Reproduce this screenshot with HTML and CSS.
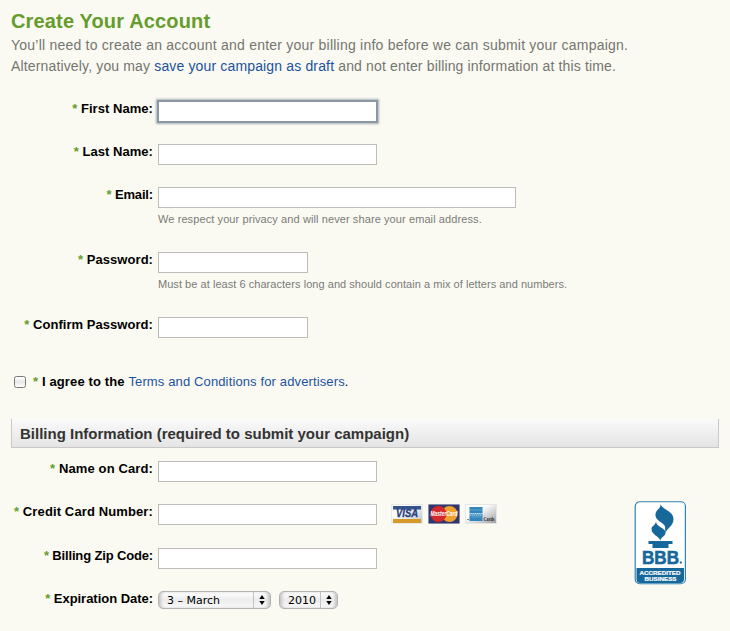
FILE: index.html
```html
<!DOCTYPE html>
<html lang="en">
<head>
<meta charset="utf-8">
<title>Create Your Account</title>
<link rel="stylesheet" href="styles.css">
</head>
<body>
<form class="page">
  <header class="intro">
    <h1><span>Create Your Account</span></h1>
    <p><span class="intro-a">You’ll need to create an account and enter your billing info before we can submit your campaign.</span><br>
    <span class="intro-b">Alternatively, you may <a href="#">save your campaign as draft</a> and not enter billing information at this time.</span></p>
  </header>

  <section class="account">
    <div class="row"><label for="first"><i>*</i> First Name:</label><div><input id="first" class="focused" type="text"></div></div>
    <div class="row"><label for="last"><i>*</i> Last Name:</label><div><input id="last" type="text"></div></div>
    <div class="row tall"><label for="email" class="tighter"><i>*</i> Email:</label><div><input id="email" class="wide" type="text"><small class="loose">We respect your privacy and will never share your email address.</small></div></div>
    <div class="row tall"><label for="pass"><i>*</i> Password:</label><div><input id="pass" class="short" type="password"><small>Must be at least 6 characters long and should contain a mix of letters and numbers.</small></div></div>
    <div class="row"><label for="confirm"><i>*</i> Confirm Password:</label><div><input id="confirm" class="short" type="password"></div></div>
  </section>

  <div class="agree"><input id="agree" type="checkbox"><label for="agree"><i>*</i> I agree to the <span><a href="#">Terms and Conditions for advertisers</a>.</span></label></div>

  <h2><span>Billing Information (required to submit your campaign)</span></h2>

  <section class="billing">
    <div class="fields">
      <div class="row"><label for="holder" class="loose"><i>*</i> Name on Card:</label><div><input id="holder" type="text"></div></div>
      <div class="row card-row"><label for="number" class="loose"><i>*</i> Credit Card Number:</label>
        <div class="number">
          <input id="number" type="text">
          <div class="cards">
            <svg width="32" height="20" viewBox="0 0 32 20">
              <defs><linearGradient id="sheen" x1="0" y1="0" x2="1" y2="1"><stop offset=".3" stop-color="#fff"/><stop offset="1" stop-color="#bfc3c9"/></linearGradient></defs>
              <rect width="32" height="20" fill="#e9e9e6"/><rect x="1" y="1" width="30" height="18" fill="url(#sheen)"/>
              <rect x="2" y="2" width="28" height="3.5" fill="#35548c"/><rect x="2" y="15" width="28" height="4" fill="#d69a2b"/>
              <text x="5" y="13.4" textLength="22" lengthAdjust="spacingAndGlyphs" class="visa">VISA</text>
            </svg>
            <svg width="32" height="20" viewBox="0 0 32 20">
              <rect width="32" height="20" fill="#e2e2e4"/><rect x=".5" y=".5" width="31" height="19" fill="#30376d"/>
              <circle cx="21.500" cy="10" r="8" fill="#efa12e"/><circle cx="10.500" cy="10" r="8" fill="#d3292c"/>
              <text x="2.500" y="12.200" textLength="27" lengthAdjust="spacingAndGlyphs" class="mc">MasterCard</text>
            </svg>
            <svg width="32" height="20" viewBox="0 0 32 20">
              <defs><linearGradient id="silver" x1="0" y1="0" x2="1" y2="1"><stop offset=".35" stop-color="#fff"/><stop offset="1" stop-color="#9da1a6"/></linearGradient></defs>
              <rect width="32" height="20" fill="#e6e6e3"/><rect x="1" y="1" width="30" height="18" fill="url(#silver)"/>
              <rect x="4.500" y="3" width="13" height="14" fill="#3386bd"/><path d="M5 6h12M6 13h11" stroke="#58a2cf"/>
              <path d="M4 9.500h14M5 11h12" stroke="#c5e0ef" stroke-width="1" stroke-dasharray="1.5 .5"/>
              <rect x="2" y="15" width="2" height="1" fill="#888"/>
              <text x="18.500" y="16.500" textLength="11" lengthAdjust="spacingAndGlyphs" class="amex">Cards</text>
            </svg>
          </div>
        </div>
      </div>
      <div class="row"><label for="zip" class="tighter"><i>*</i> Billing Zip Code:</label><div><input id="zip" type="text"></div></div>
      <div class="row"><label class="tight"><i>*</i> Expiration Date:</label>
        <div class="selects">
          <div class="select month"><span>3 – March</span><b><svg width="6" height="10" viewBox="0 0 6 10"><path d="M3 0L5.7 4H.3zM3 10L.3 6h5.4z"/></svg></b></div>
          <div class="select year"><span>2010</span><b><svg width="6" height="10" viewBox="0 0 6 10"><path d="M3 0L5.7 4H.3zM3 10L.3 6h5.4z"/></svg></b></div>
        </div>
      </div>
    </div>
    <svg class="bbb" width="52" height="84" viewBox="0 0 52 84">
      <rect x="1.200" y=".75" width="50.200" height="82" rx="4.500" fill="#fff" stroke="#3382ae" stroke-width="1.200"/>
      <path d="M2.500 67h47.500v11q0 4-4 4H6.500q-4 0-4-4z" fill="#16679a"/>
      <g fill="#16679a">
        <path d="M26.500 3C28 8.500 39.500 10 39.500 18C39.500 25 33 27 31.500 32C30.500 27 32.500 25 28.500 22.500C25 20 21 18 21.500 13C22 8 27 8 26.500 3Z"/>
        <path d="M22 20.500C22 26 32 27 31.500 32C31 36 27 35.500 26.500 39.500C24.500 35 17.500 33.500 17.500 28C17.500 24.500 21.500 24.500 22 20.500Z"/>
        <path d="M14.500 40h24v3h-4v4H18.500v-4h-4z"/>
      </g>
      <text x="8" y="62.500" textLength="37" lengthAdjust="spacingAndGlyphs" class="bbb-name">BBB</text>
      <rect x="45.800" y="60.500" width="2" height="2" fill="#16679a"/>
      <text x="5.500" y="73.500" textLength="41" lengthAdjust="spacingAndGlyphs" class="bbb-text">ACCREDITED</text>
      <text x="10.500" y="79.500" textLength="32" lengthAdjust="spacingAndGlyphs" class="bbb-text">BUSINESS</text>
    </svg>
  </section>
</form>
</body>
</html>
```
FILE: styles.css
```css
* { box-sizing: border-box; }
body {
  margin: 0;
  background: #fafaf2;
  color: #000;
  font: 13px/16px "Liberation Sans", Arial, sans-serif;
}
.page { padding: 8px 11px 0; }
a { color: #1a52a0; text-decoration: none; }
h1 { margin: 0 0 1px; font-size: 20px; line-height: 26px; color: #669c2c; letter-spacing: .15px; }
.intro { height: 93px; }
.intro p { margin: 0; font-size: 14px; line-height: 21px; color: #757570; white-space: nowrap; }
.intro-a { letter-spacing: .225px; }
.intro-b { letter-spacing: .15px; }
.row {
  display: grid;
  grid-template-columns: 142px 1fr;
  column-gap: 5px;
  height: 43px;
}
.row.tall { height: 65px; }
.row > label { text-align: right; font-weight: bold; white-space: nowrap; letter-spacing: .05px; }
.row > label.loose { letter-spacing: .12px; }
.row > label.tight { letter-spacing: -.03px; }
.row > label.tighter { letter-spacing: -.15px; }
label i { font-style: normal; font-weight: bold; color: #669c2c; }
input[type="text"], input[type="password"] {
  display: block;
  width: 219px;
  height: 21px;
  margin: 0;
  padding: 0 3px;
  border: 1px solid #bcbcbc;
  border-radius: 0;
  background: #fff;
  outline: 0;
}
input.wide { width: 358px; }
input.short { width: 150px; }
input.focused {
  border-color: #8b98a4;
  box-shadow: 0 0 0 1px #8b98a4, 0 0 2px 2px #a8b2ba;
}
small { display: block; margin-top: 4px; font-size: 11px; line-height: 14px; color: #7b7b77; white-space: nowrap; letter-spacing: .045px; }
small.loose { letter-spacing: .095px; }
.agree { display: flex; align-items: center; height: 18px; margin-top: 13px; padding-left: 3px; font-weight: bold; letter-spacing: .13px; }
.agree input {
  appearance: none;
  width: 12px;
  height: 12px;
  margin: 0 7px 0 0;
  border: 1px solid #777;
  border-radius: 2.5px;
  background: linear-gradient(#fff, #e8e8e8 50%, #fff);
}
.agree span { font-weight: normal; }
h2 {
  height: 29px;
  margin: 28px 0 13px;
  padding-left: 8px;
  border: solid #c8c8c8;
  border-width: 0 1px 1px;
  background: linear-gradient(#fafafa, #e4e4e4);
  color: #333;
  font-size: 15px;
  line-height: 30px;
}
.billing { display: flex; justify-content: space-between; padding-right: 33px; }
.card-row { height: 44px; }
.number { display: flex; gap: 14px; }
.cards { display: flex; gap: 5px; }
.visa { font: italic bold 10px "Liberation Sans", sans-serif; fill: #263f7a; stroke: #263f7a; stroke-width: .3px; }
.mc { font: italic bold 6.5px "Liberation Sans", sans-serif; fill: #fff; }
.amex { font: bold 5.5px "Liberation Serif", serif; fill: #222; }
.selects { display: flex; gap: 8px; }
.select {
  display: flex;
  justify-content: space-between;
  height: 18px;
  border: 1px solid #b2b2b2;
  border-radius: 5px;
  background: linear-gradient(#fff, #ececec 50%, #fafafa);
  box-shadow: inset 3px 0 3px -1px #c5c5c5, inset -3px 0 3px -1px #c5c5c5;
  font: 11px/17px "DejaVu Sans", sans-serif;
}
.select span { padding-left: 8px; }
.select b { display: flex; align-items: center; justify-content: center; width: 17px; border-left: 1px solid #c2c2c2; }
.month { width: 113px; }
.year { width: 59px; }
.bbb { margin-top: 40px; }
.bbb-name { font: bold 18px "Liberation Sans", sans-serif; fill: #16679a; stroke: #16679a; stroke-width: .6px; }
.bbb-text { font: bold 6.2px "Liberation Sans", sans-serif; fill: #fff; stroke: #fff; stroke-width: .2px; }
```
